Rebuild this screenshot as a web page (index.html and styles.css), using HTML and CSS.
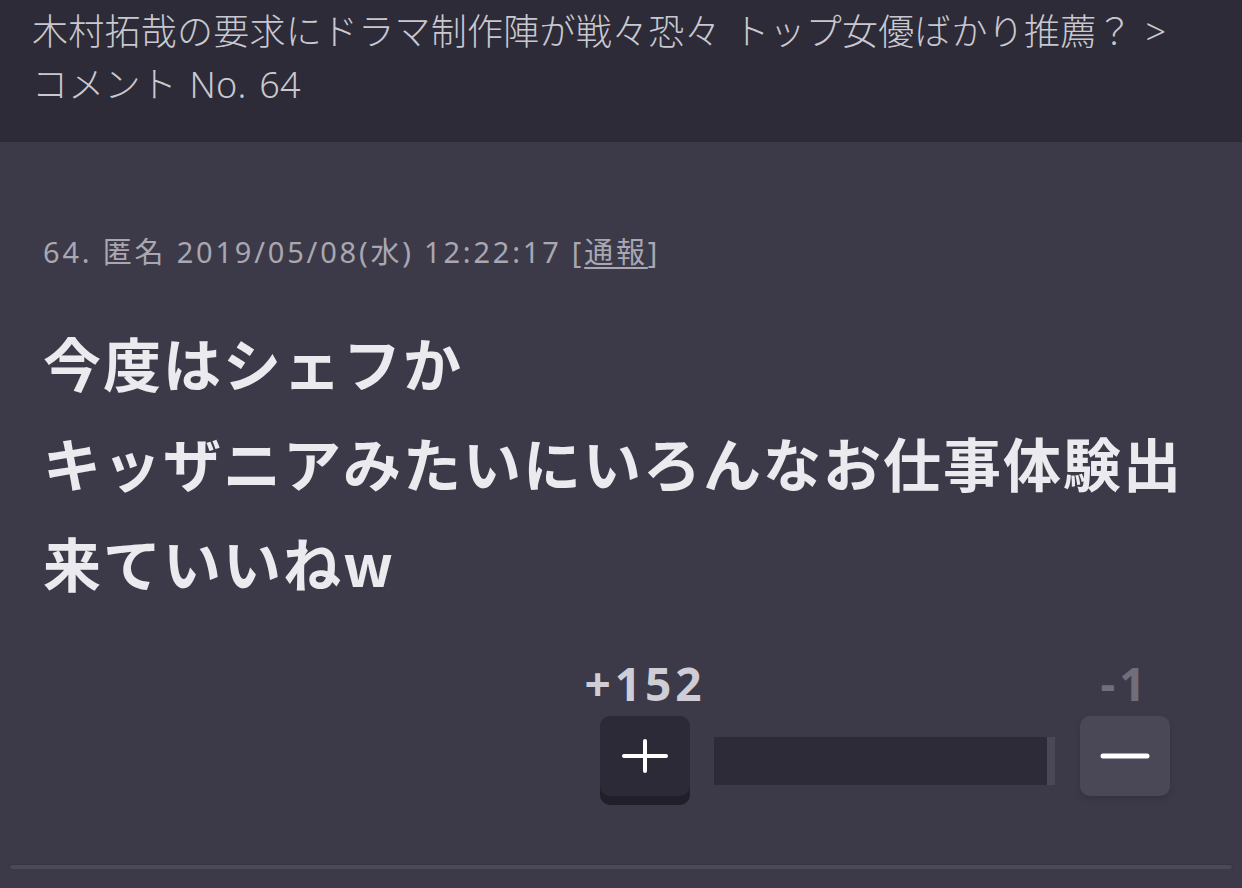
FILE: index.html
```html
<!DOCTYPE html>
<html lang="ja">
<head>
  <meta charset="UTF-8">
  <meta name="viewport" content="width=device-width, initial-scale=1.0">
  <title>コメント No. 64</title>
  <link rel="stylesheet" href="styles.css">
</head>
<body>
  <header class="topic">
    <a class="topic-link" href="#">木村拓哉の要求にドラマ制作陣が戦々恐々 トップ女優ばかり推薦？ &gt;<br>コメント No. 64</a>
  </header>

  <div class="comment">
    <div class="comment-meta">64. 匿名 2019/05/08(水) 12:22:17 [<a href="#" class="report">通報</a>]</div>

    <div class="comment-body">
      今度はシェフか<br>
      キッザニアみたいにいろんなお仕事体験出<br>
      来ていいねw
    </div>

    <div class="vote">
      <div class="vote-col">
        <div class="vote-count plus-count">+152</div>
        <button class="vote-btn plus-btn" aria-label="プラス">
          <svg width="46" height="34" viewBox="0 0 46 34"><path d="M2 17H44M23 2V32" stroke="#fff" stroke-width="4" stroke-linecap="round"/></svg>
        </button>
      </div>
      <div class="vote-bar"><div class="vote-fill" style="width: 97.8%"></div></div>
      <div class="vote-col">
        <div class="vote-count minus-count">-1</div>
        <button class="vote-btn minus-btn" aria-label="マイナス">
          <svg width="50" height="8" viewBox="0 0 50 8"><path d="M3 4H47" stroke="#fff" stroke-width="5" stroke-linecap="round"/></svg>
        </button>
      </div>
    </div>
  </div>

  <div class="divider"></div>
</body>
</html>
```

FILE: styles.css
```css
body {
  margin: 0;
  background-color: #3c3a48;
  font-family: "Noto Sans", "Noto Sans CJK JP", sans-serif;
  color: #ebebef;
}
a {
  color: inherit;
  text-decoration: none;
}
.topic {
  height: 142px;
  box-sizing: border-box;
  padding: 5px 32px 0;
  background-color: #2c2b37;
}
.topic-link {
  font-size: 36px;
  line-height: 53px;
  font-weight: 300;
  letter-spacing: 0.25px;
  word-spacing: 3px;
  color: #c9c8d0;
}
.comment {
  padding: 0 43px;
}
.comment-meta {
  padding-top: 92px;
  font-size: 29px;
  line-height: 36px;
  letter-spacing: 2.8px;
  color: #a9a7b2;
}
.report {
  text-decoration: underline;
  text-underline-offset: 4px;
}
.comment-body {
  margin-top: 42px;
  font-family: "Noto Sans CJK JP", "Noto Sans", sans-serif;
  font-size: 58px;
  line-height: 100px;
  font-weight: 700;
  letter-spacing: 2px;
}
.vote {
  display: flex;
  justify-content: flex-end;
  align-items: flex-end;
  margin-top: 46px;
  margin-right: 29px;
}
.vote-col {
  display: flex;
  flex-direction: column;
  align-items: center;
  width: 90px;
}
.vote-count {
  font-size: 46px;
  line-height: 50px;
  font-weight: 700;
  letter-spacing: 4px;
  margin-bottom: 8px;
}
.plus-count {
  color: #cfcdd6;
}
.minus-count {
  color: #706e7b;
}
.vote-btn {
  display: flex;
  align-items: center;
  justify-content: center;
  width: 90px;
  height: 80px;
  padding: 0;
  border: none;
  border-radius: 10px;
  cursor: pointer;
}
.plus-btn {
  background-color: #2b2a36;
  box-shadow: 0 9px 0 #201f2a;
  margin-bottom: 9px;
}
.minus-btn {
  background-color: #4a4856;
  box-shadow: 0 3px 5px #35333f;
  margin-bottom: 9px;
}
.vote-bar {
  width: 341px;
  height: 48px;
  margin: 0 25px 20px 24px;
  background-color: #4a4856;
}
.vote-fill {
  height: 100%;
  background-color: #2d2b38;
}
.divider {
  height: 4px;
  margin: 60px 10px 0;
  border-radius: 2px;
  background-color: #4b4958;
  box-shadow: 0 0 2px #2a2935;
}
```
